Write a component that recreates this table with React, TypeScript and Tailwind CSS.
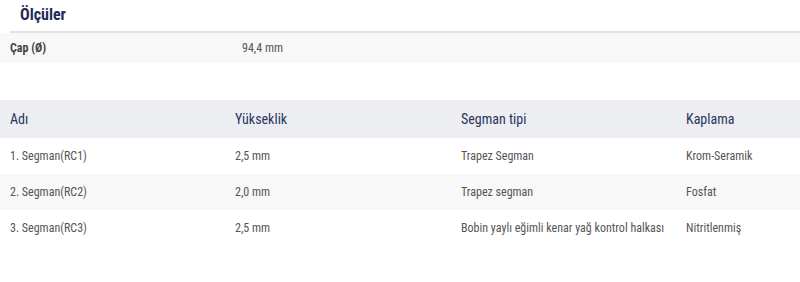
const rows = [
  { name: "1. Segman(RC1)", height: "2,5 mm", type: "Trapez Segman", coating: "Krom-Seramik" },
  { name: "2. Segman(RC2)", height: "2,0 mm", type: "Trapez segman", coating: "Fosfat" },
  { name: "3. Segman(RC3)", height: "2,5 mm", type: "Bobin yaylı eğimli kenar yağ kontrol halkası", coating: "Nitritlenmiş" },
];

const cols = "grid grid-cols-[225px_226px_225px_1fr] px-[10px]";

export default function App() {
  return (
    <div className="w-[800px] h-[282px] bg-white font-['Roboto_Condensed',Roboto,sans-serif] font-stretch-condensed">
      <div className="pt-[5px] pl-[20px] h-[31px] text-[16px] font-bold leading-[20px] text-[#1f2a56]">Ölçüler</div>
      <div className="ml-[10px] h-[2px] bg-[#e2e2e2]" />
      <div className="flex h-[30px] items-center bg-[#f8f8f8] px-[10px] text-[12px]">
        <span className="w-[232px] font-bold text-[#444]">Çap (Ø)</span>
        <span className="text-[#555]">94,4 mm</span>
      </div>

      <div className="mt-[37px]">
        <div className={`${cols} h-[38px] items-center bg-[#eceef2] text-[14px] text-[#2a3460]`}>
          <span>Adı</span>
          <span>Yükseklik</span>
          <span>Segman tipi</span>
          <span>Kaplama</span>
        </div>
        {rows.map((r, i) => (
          <div
            key={r.name}
            className={`${cols} h-[36px] items-center text-[12px] text-[#555] ${i % 2 === 1 ? "bg-[#f8f8f8]" : "bg-white"}`}
          >
            <span>{r.name}</span>
            <span>{r.height}</span>
            <span>{r.type}</span>
            <span>{r.coating}</span>
          </div>
        ))}
      </div>
    </div>
  );
}
